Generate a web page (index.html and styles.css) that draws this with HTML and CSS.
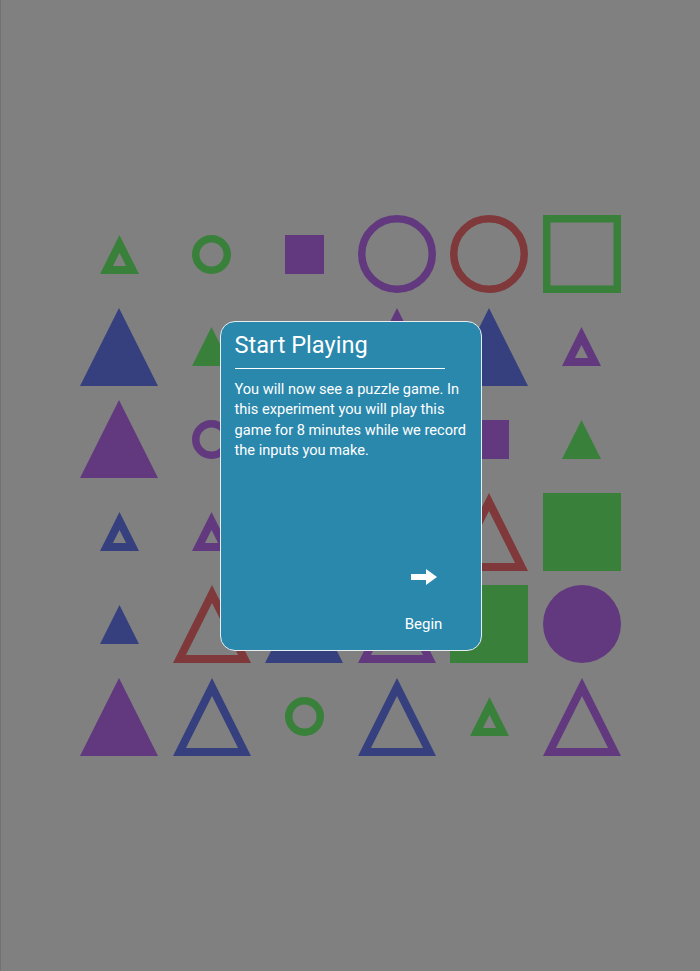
FILE: index.html
```html
<!DOCTYPE html>
<html lang="en">
<head>
<meta charset="utf-8">
<title>Start Playing</title>
<link rel="stylesheet" href="styles.css">
</head>
<body>
<svg class="defs" width="0" height="0" aria-hidden="true">
  <symbol id="tri-f-l" viewBox="0 0 78 78"><path d="M39 0L78 78H0Z"/></symbol>
  <symbol id="tri-o-l" viewBox="0 0 78 78"><path fill-rule="evenodd" d="M39 0L78 78H0Z M39 17.9L65.05 70H12.95Z"/></symbol>
  <symbol id="tri-f-s" viewBox="0 0 39 39"><path d="M19.5 0L39 39H0Z"/></symbol>
  <symbol id="tri-o-s" viewBox="0 0 39 39"><path fill-rule="evenodd" d="M19.5 0L39 39H0Z M19.5 17.9L26.05 31H12.95Z"/></symbol>
  <symbol id="cir-o-l" viewBox="0 0 78 78"><circle cx="39" cy="39" r="35.25" fill="none" stroke="currentColor" stroke-width="7.5"/></symbol>
  <symbol id="cir-f-l" viewBox="0 0 78 78"><circle cx="39" cy="39" r="39"/></symbol>
  <symbol id="cir-o-s" viewBox="0 0 39 39"><circle cx="19.5" cy="19.5" r="15.75" fill="none" stroke="currentColor" stroke-width="7.5"/></symbol>
  <symbol id="cir-f-s" viewBox="0 0 39 39"><circle cx="19.5" cy="19.5" r="19.5"/></symbol>
  <symbol id="sq-o-l" viewBox="0 0 78 78"><rect x="3.75" y="3.75" width="70.5" height="70.5" fill="none" stroke="currentColor" stroke-width="7.5"/></symbol>
  <symbol id="sq-f-l" viewBox="0 0 78 78"><rect width="78" height="78"/></symbol>
  <symbol id="sq-f-s" viewBox="0 0 39 39"><rect width="39" height="39"/></symbol>
</svg>

<main class="screen">
  <div class="board">
    <!-- row 1 -->
    <div class="cell"><svg class="shape sm green"><use href="#tri-o-s"/></svg></div>
    <div class="cell"><svg class="shape sm green"><use href="#cir-o-s"/></svg></div>
    <div class="cell"><svg class="shape sm purple"><use href="#sq-f-s"/></svg></div>
    <div class="cell"><svg class="shape lg purple"><use href="#cir-o-l"/></svg></div>
    <div class="cell"><svg class="shape lg red"><use href="#cir-o-l"/></svg></div>
    <div class="cell"><svg class="shape lg green"><use href="#sq-o-l"/></svg></div>
    <!-- row 2 -->
    <div class="cell"><svg class="shape lg blue"><use href="#tri-f-l"/></svg></div>
    <div class="cell"><svg class="shape sm green"><use href="#tri-f-s"/></svg></div>
    <div class="cell"><svg class="shape sm red"><use href="#cir-f-s"/></svg></div>
    <div class="cell"><svg class="shape lg purple"><use href="#tri-f-l"/></svg></div>
    <div class="cell"><svg class="shape lg blue"><use href="#tri-f-l"/></svg></div>
    <div class="cell"><svg class="shape sm purple"><use href="#tri-o-s"/></svg></div>
    <!-- row 3 -->
    <div class="cell"><svg class="shape lg purple"><use href="#tri-f-l"/></svg></div>
    <div class="cell"><svg class="shape sm purple"><use href="#cir-o-s"/></svg></div>
    <div class="cell"><svg class="shape lg blue"><use href="#sq-o-l"/></svg></div>
    <div class="cell"><svg class="shape sm green"><use href="#cir-o-s"/></svg></div>
    <div class="cell"><svg class="shape sm purple"><use href="#sq-f-s"/></svg></div>
    <div class="cell"><svg class="shape sm green"><use href="#tri-f-s"/></svg></div>
    <!-- row 4 -->
    <div class="cell"><svg class="shape sm blue"><use href="#tri-o-s"/></svg></div>
    <div class="cell"><svg class="shape sm purple"><use href="#tri-o-s"/></svg></div>
    <div class="cell"><svg class="shape lg green"><use href="#tri-o-l"/></svg></div>
    <div class="cell"><svg class="shape sm red"><use href="#sq-f-s"/></svg></div>
    <div class="cell"><svg class="shape lg red"><use href="#tri-o-l"/></svg></div>
    <div class="cell"><svg class="shape lg green"><use href="#sq-f-l"/></svg></div>
    <!-- row 5 -->
    <div class="cell"><svg class="shape sm blue"><use href="#tri-f-s"/></svg></div>
    <div class="cell"><svg class="shape lg red"><use href="#tri-o-l"/></svg></div>
    <div class="cell"><svg class="shape lg blue"><use href="#tri-f-l"/></svg></div>
    <div class="cell"><svg class="shape lg purple"><use href="#tri-o-l"/></svg></div>
    <div class="cell"><svg class="shape lg green"><use href="#sq-f-l"/></svg></div>
    <div class="cell"><svg class="shape lg purple"><use href="#cir-f-l"/></svg></div>
    <!-- row 6 -->
    <div class="cell"><svg class="shape lg purple"><use href="#tri-f-l"/></svg></div>
    <div class="cell"><svg class="shape lg blue"><use href="#tri-o-l"/></svg></div>
    <div class="cell"><svg class="shape sm green"><use href="#cir-o-s"/></svg></div>
    <div class="cell"><svg class="shape lg blue"><use href="#tri-o-l"/></svg></div>
    <div class="cell"><svg class="shape sm green"><use href="#tri-o-s"/></svg></div>
    <div class="cell"><svg class="shape lg purple"><use href="#tri-o-l"/></svg></div>
  </div>

  <section class="dialog" role="dialog" aria-labelledby="dlg-title">
    <h2 class="dialog-title" id="dlg-title">Start Playing</h2>
    <p class="dialog-text">You will now see a puzzle game. In this experiment you will play this game for 8 minutes while we record the inputs you make.</p>
    <div class="dialog-actions">
      <button class="begin" type="button">
        <svg class="begin-icon" viewBox="0 0 26 16" aria-hidden="true"><path d="M0 5H15V0L26 8L15 16V11H0Z"/></svg>
        <span class="begin-label">Begin</span>
      </button>
    </div>
  </section>
</main>
</body>
</html>
```

FILE: styles.css
```css
* { box-sizing: border-box; }

html, body {
  margin: 0;
  padding: 0;
  background: #808080;
}

.defs {
  position: absolute;
  width: 0;
  height: 0;
  overflow: hidden;
}

.screen {
  position: relative;
  width: 700px;
  height: 971px;
  border-left: 1px solid #727272;
  display: flex;
  align-items: center;
  justify-content: center;
  background: #808080;
}

.board {
  display: grid;
  grid-template-columns: repeat(6, 92.6px);
  grid-auto-rows: 92.6px;
}

.cell {
  display: flex;
  align-items: center;
  justify-content: center;
}

.shape { fill: currentColor; display: block; }
.shape.lg { width: 78px; height: 78px; }
.shape.sm { width: 39px; height: 39px; }

.green  { color: #39803a; }
.purple { color: #62397f; }
.blue   { color: #36407f; }
.red    { color: #7f393a; }

.dialog {
  position: absolute;
  left: 50%;
  top: 50%;
  transform: translate(-50%, -50%);
  width: 262px;
  height: 330px;
  background: #2a88ad;
  border: 1px solid #e8eef0;
  border-radius: 15px;
  padding: 9px 10px 17px 14px;
  display: flex;
  flex-direction: column;
  font-family: Roboto, "Liberation Sans", sans-serif;
  color: #ffffff;
}

.dialog-title {
  margin: 0;
  width: 210px;
  font-size: 23.6px;
  font-weight: 400;
  line-height: 28px;
  padding-bottom: 9px;
  border-bottom: 1px solid #ffffff;
}

.dialog-text {
  margin: 10px 0 0;
  font-size: 14.6px;
  line-height: 20.5px;
  flex: 1;
}

.dialog-actions {
  display: flex;
  justify-content: flex-end;
  padding-right: 17px;
}

.begin {
  width: 60px;
  background: none;
  border: 0;
  padding: 0;
  color: #ffffff;
  font: inherit;
  display: flex;
  flex-direction: column;
  align-items: center;
  gap: 30px;
}

.begin-icon {
  width: 26px;
  height: 16px;
  fill: #ffffff;
  display: block;
}

.begin-label {
  font-size: 15px;
  line-height: 18px;
}
```
